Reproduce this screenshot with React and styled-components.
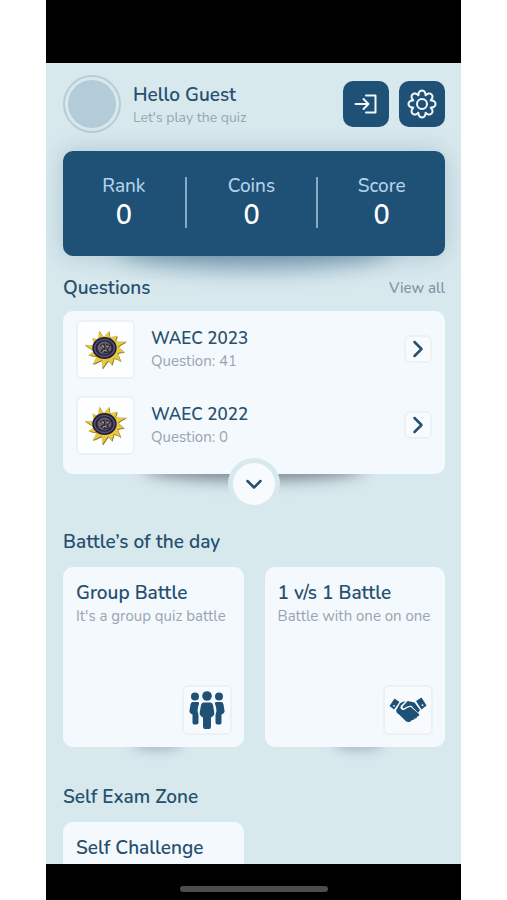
import React from "react";
import styled, { createGlobalStyle } from "styled-components";

const navy = "#1f5177";
const ink = "#27506f";
const page = "#d8e9ee";
const surface = "#f4f9fd";
const muted = "#98a5b1";

const GlobalStyle = createGlobalStyle`
  * { box-sizing: border-box; }
  body { margin: 0; background: #fff; }
  h1, h2, h3, p, ul, dl, dd { margin: 0; padding: 0; font-weight: inherit; }
  button { font: inherit; border: 0; padding: 0; cursor: pointer; }
`;

const Phone = styled.div`
  display: flex;
  flex-direction: column;
  width: calc(100% - 92px);
  height: 100vh;
  margin: 0 auto;
  background: ${page};
  color: ${ink};
  font-family: Nunito, Lato, "Open Sans", sans-serif;
`;

const StatusBar = styled.div`
  flex: 0 0 63px;
  background: #000;
`;

const Content = styled.main`
  flex: 1;
  min-height: 0;
  overflow: hidden;
  isolation: isolate;
  padding: 12px 16px 0 17px;
`;

const HomeBar = styled.div`
  flex: 0 0 36px;
  display: flex;
  justify-content: center;
  padding-top: 22px;
  background: #000;
`;

const HomeIndicator = styled.div`
  width: 148px;
  height: 6px;
  border-radius: 3px;
  background: #4c4c4c;
`;

const Header = styled.header`
  display: flex;
  align-items: center;
  gap: 10px;
  height: 58px;
`;

const Avatar = styled.div`
  width: 58px;
  height: 58px;
  padding: 3px;
  border: 2px solid #b8cdd9;
  border-radius: 50%;
  background: #b4cbd8;
  background-clip: content-box;
`;

const Greeting = styled.div`
  flex: 1;
  padding: 3px 0 0 2px;
`;

const Name = styled.h1`
  font-size: 19px;
  line-height: 24px;
  font-weight: 600;
`;

const Caption = styled.p`
  font-size: ${(p) => (p.$small ? "14px" : "15px")};
  line-height: 22px;
  color: ${muted};
  white-space: nowrap;
`;

const HeaderButton = styled.button`
  display: grid;
  place-items: center;
  width: 46px;
  height: 46px;
  border-radius: 10px;
  background: ${navy};
  color: #eff8fc;
`;

const Stats = styled.dl`
  position: relative;
  display: grid;
  grid-template-columns: 122fr 2px 130fr 2px 127fr;
  align-items: center;
  height: 105px;
  margin-top: 18px;
  padding-bottom: 2px;
  border-radius: 10px;
  background: ${navy};
  box-shadow: 0 0 24px rgba(31, 81, 119, 0.24);

  &::after {
    content: "";
    position: absolute;
    z-index: -1;
    left: 14%;
    right: 14%;
    bottom: -12px;
    height: 44px;
    border-radius: 50%;
    background: rgba(31, 81, 119, 0.5);
    filter: blur(12px);
  }
`;

const Stat = styled.div`
  text-align: center;
`;

const StatLabel = styled.dt`
  font-size: 19px;
  line-height: 26px;
  font-weight: 500;
  color: #b3d2eb;
`;

const StatValue = styled.dd`
  font-size: 27px;
  line-height: 34px;
  font-weight: 600;
  color: #fff;
`;

const Divider = styled.div`
  height: 51px;
  background: #86abc9;
`;

const SectionHead = styled.div`
  display: flex;
  align-items: center;
  justify-content: space-between;
  height: 26px;
  margin-top: ${(p) => p.$gap};
`;

const SectionTitle = styled.h2`
  font-size: 19px;
  line-height: 26px;
  font-weight: 600;
`;

const ViewAll = styled.a`
  font-size: 15px;
  color: #7f929f;
  font-weight: 500;
  text-decoration: none;
`;

const ListCard = styled.div`
  position: relative;
  height: 163px;
  margin-top: 10px;
  padding: 9px 13px;
  border-radius: 10px;
  background: ${surface};

  &::after {
    content: "";
    position: absolute;
    z-index: -1;
    left: 21%;
    right: 21%;
    bottom: -6px;
    height: 24px;
    border-radius: 50%;
    background: rgba(50, 58, 66, 0.6);
    filter: blur(8px);
  }
`;

const List = styled.ul`
  display: grid;
  gap: 18px;
  list-style: none;
`;

const Row = styled.li`
  display: flex;
  align-items: center;
  height: 58px;
`;

const Thumb = styled.div`
  display: grid;
  place-items: center;
  width: 59px;
  height: 59px;
  margin-right: 16px;
  border: 2px solid #ebf2f6;
  border-radius: 6px;
  background: #fdfeff;
`;

const RowText = styled.div`
  flex: 1;
  padding-top: 2px;
`;

const RowTitle = styled.h3`
  font-size: 17px;
  line-height: 22px;
  font-weight: 600;
`;

const OpenButton = styled.button`
  display: grid;
  place-items: center;
  width: 28px;
  height: 28px;
  border: 2px solid #ebf1f5;
  border-radius: 6px;
  background: #f8fbfe;
  color: ${ink};
`;

const ExpandButton = styled.button`
  position: absolute;
  left: 50%;
  bottom: -36px;
  transform: translateX(-50%);
  display: grid;
  place-items: center;
  width: 52px;
  height: 52px;
  border: 5px solid ${page};
  border-radius: 50%;
  background: #f8fbfe;
  color: ${ink};
`;

const Cards = styled.div`
  display: grid;
  grid-template-columns: 1fr 1fr;
  gap: 21px;
  margin-top: 12px;
`;

const Card = styled.article`
  position: relative;
  display: flex;
  flex-direction: column;
  justify-content: space-between;
  height: 180px;
  padding: 14px 12px 12px 13px;
  border-radius: 10px;
  background: ${surface};

  &::after {
    content: "";
    position: absolute;
    z-index: -1;
    left: 38%;
    right: 34%;
    bottom: -3px;
    height: 14px;
    border-radius: 50%;
    background: rgba(60, 84, 98, 0.35);
    filter: blur(6px);
  }
`;

const CardTitle = styled.h3`
  font-size: 19px;
  line-height: 24px;
  font-weight: 600;
`;

const CardIcon = styled.div`
  display: grid;
  place-items: center;
  align-self: flex-end;
  width: 50px;
  height: 50px;
  border: 2px solid #ebf1f5;
  border-radius: 6px;
  background: #f8fbfe;
  color: ${navy};
`;

const LoginIcon = () => (
  <svg width="26" height="24" viewBox="0 0 26 24" fill="none" stroke="currentColor" strokeWidth="2" aria-hidden="true">
    <path d="M13 3.5h9.5v17H13M2.5 12h13M10.5 7l5 5-5 5" strokeLinejoin="round" strokeLinecap="round" />
  </svg>
);

const gearPath =
  Array.from({ length: 144 }, (_, i) => {
    const a = (i / 144) * Math.PI * 2;
    const r = 11.5 + 2 * Math.cos(8 * a);
    const b = a + 0.085 * Math.sin(8 * a);
    return `${i ? "L" : "M"}${(15 + r * Math.sin(b)).toFixed(2)} ${(15 - r * Math.cos(b)).toFixed(2)}`;
  }).join("") + "Z";

const GearIcon = () => (
  <svg width="30" height="30" viewBox="0 0 30 30" fill="none" stroke="currentColor" strokeWidth="2" strokeLinejoin="round" aria-hidden="true">
    <path d={gearPath} />
    <circle cx="15" cy="15" r="5" />
  </svg>
);

const ChevronRight = () => (
  <svg width="16" height="18" viewBox="0 0 16 18" fill="none" stroke="currentColor" strokeWidth="2.5" strokeLinecap="round" strokeLinejoin="round" aria-hidden="true">
    <path d="M4.5 2l7 7-7 7" />
  </svg>
);

const ChevronDown = () => (
  <svg width="18" height="12" viewBox="0 0 18 12" fill="none" stroke="currentColor" strokeWidth="2.5" strokeLinecap="round" strokeLinejoin="round" aria-hidden="true">
    <path d="M2.5 3l6.5 6.5L15.5 3" />
  </svg>
);

const rays = [18, 17, 21, 18, 19, 17, 20, 20, 18, 21, 17, 19];

const sunPath =
  rays
    .map((len, i) => {
      const step = (Math.PI * 2) / rays.length;
      const a = i * step + 0.1;
      const at = (r, t) => `${(21 + r * 1.02 * Math.sin(t)).toFixed(1)} ${(21 - r * Math.cos(t)).toFixed(1)}`;
      return `${i ? "L" : "M"}${at(12, a - step / 2)}Q${at(14, a - 0.12)} ${at(len, a + 0.08)}Q${at(14, a + 0.12)} ${at(12, a + step / 2)}`;
    })
    .join("") + "Z";

const SunCrest = () => (
  <svg width="42" height="42" viewBox="0 0 42 42" aria-hidden="true">
    <path d={sunPath} fill="#68571d" transform="translate(.6 .7)" />
    <path d={sunPath} fill="#e8cb3c" stroke="#c3a52c" strokeWidth=".5" />
    <ellipse cx="19.5" cy="20" rx="12.2" ry="11" fill="#24203a" />
    <ellipse cx="19.5" cy="20" rx="9.8" ry="8.5" fill="none" stroke="#54517a" strokeWidth="1.5" />
    <ellipse cx="19.5" cy="20" rx="7" ry="6.5" fill="#6b6270" />
    <path d="M15 18l4-2 1 4-4 3M21 16l4 2-3 3 2 3-5 1 1-4M16 24l2-3" fill="none" stroke="#2c2742" strokeWidth="1.3" />
    <path d="M17 17l2 2M22 19l2-1M18 23l3-1" stroke="#c0a85c" strokeWidth="1" />
  </svg>
);

const PeopleIcon = () => (
  <svg width="38" height="40" viewBox="0 0 38 40" fill="currentColor" aria-hidden="true">
    <circle cx="7" cy="6.5" r="4" />
    <circle cx="19" cy="6" r="4.8" />
    <circle cx="31" cy="6.5" r="4" />
    <path d="M4.500 12h5.500q1.500 0 1 2-2.500 6-.5 11v7.500q0 2-2 2H6q-1.500 0-1.500-2v-8q-3.500-1.500-3-4l1-6q.4-2.500 2-2.500z" />
    <path d="M33.500 12H28q-1.500 0-1 2 2.500 6 .5 11v7.500q0 2 2 2H32q1.500 0 1.500-2v-8q3.500-1.500 3-4l-1-6q-.4-2.500-2-2.500z" />
    <path d="M15.500 12.500h7q2 0 2.500 2.500l1.300 7.500q.5 3-3.300 5v9q0 2.500-2 2.500h-4q-2 0-2-2.500v-9q-3.800-2-3.300-5L13 15q.5-2.500 2.500-2.500z" />
  </svg>
);

const HandshakeIcon = () => (
  <svg width="38" height="28" viewBox="0 0 38 28" fill="currentColor" aria-hidden="true">
    <path d="M5.500 2.500l5 3.500-5.500 7.500-4.500-3.500zM32.500 1.500l5 8-5 4L27 5z" />
    <path d="M11 7.500q3-2.500 5.500-2L12.500 9q-2.500 3 .5 4.700 2.500.8 5-1.700l3.500-1.300 8.500 7.300q1 1.500-.7 2.300l-1.300.2q.2 2-2.500 2-.5 2-3 1.700-1 2.300-3.500 1.800l-1.700-.5L9.500 18q-2-1-2.500-3.500z" />
    <path d="M25.500 6.500l5.500 7.500-2 2.700-7-7.200-4.500 1.300q-1.800 1.700-3.500 1.400-1-.6-.1-1.900l4.800-5.200z" />
    <circle cx="5" cy="9.800" r=".9" fill="#f8fbfe" />
    <circle cx="33.500" cy="9.200" r=".9" fill="#f8fbfe" />
  </svg>
);

const stats = [
  ["Rank", 0],
  ["Coins", 0],
  ["Score", 0],
];

const quizzes = [
  { title: "WAEC 2023", count: 41 },
  { title: "WAEC 2022", count: 0 },
];

const battles = [
  { title: "Group Battle", text: "It's a group quiz battle", icon: <PeopleIcon /> },
  { title: "1 v/s 1 Battle", text: "Battle with one on one", icon: <HandshakeIcon /> },
];

export default function App() {
  return (
    <>
      <GlobalStyle />
      <Phone>
        <StatusBar />
        <Content>
          <Header>
            <Avatar />
            <Greeting>
              <Name>Hello Guest</Name>
              <Caption $small>Let's play the quiz</Caption>
            </Greeting>
            <HeaderButton aria-label="Log in"><LoginIcon /></HeaderButton>
            <HeaderButton aria-label="Settings"><GearIcon /></HeaderButton>
          </Header>

          <Stats>
            {stats.map(([label, value], i) => (
              <React.Fragment key={label}>
                {i > 0 && <Divider />}
                <Stat>
                  <StatLabel>{label}</StatLabel>
                  <StatValue>{value}</StatValue>
                </Stat>
              </React.Fragment>
            ))}
          </Stats>

          <SectionHead $gap="19px">
            <SectionTitle>Questions</SectionTitle>
            <ViewAll href="#questions">View all</ViewAll>
          </SectionHead>
          <ListCard id="questions">
            <List>
              {quizzes.map((quiz) => (
                <Row key={quiz.title}>
                  <Thumb><SunCrest /></Thumb>
                  <RowText>
                    <RowTitle>{quiz.title}</RowTitle>
                    <Caption>Question: {quiz.count}</Caption>
                  </RowText>
                  <OpenButton aria-label={`Open ${quiz.title}`}><ChevronRight /></OpenButton>
                </Row>
              ))}
            </List>
            <ExpandButton aria-label="Show more"><ChevronDown /></ExpandButton>
          </ListCard>

          <SectionHead $gap="55px">
            <SectionTitle>Battle’s of the day</SectionTitle>
          </SectionHead>
          <Cards>
            {battles.map((battle) => (
              <Card key={battle.title}>
                <div>
                  <CardTitle>{battle.title}</CardTitle>
                  <Caption>{battle.text}</Caption>
                </div>
                <CardIcon>{battle.icon}</CardIcon>
              </Card>
            ))}
          </Cards>

          <SectionHead $gap="37px">
            <SectionTitle>Self Exam Zone</SectionTitle>
          </SectionHead>
          <Cards>
            <Card>
              <CardTitle>Self Challenge</CardTitle>
            </Card>
          </Cards>
        </Content>
        <HomeBar><HomeIndicator /></HomeBar>
      </Phone>
    </>
  );
}
